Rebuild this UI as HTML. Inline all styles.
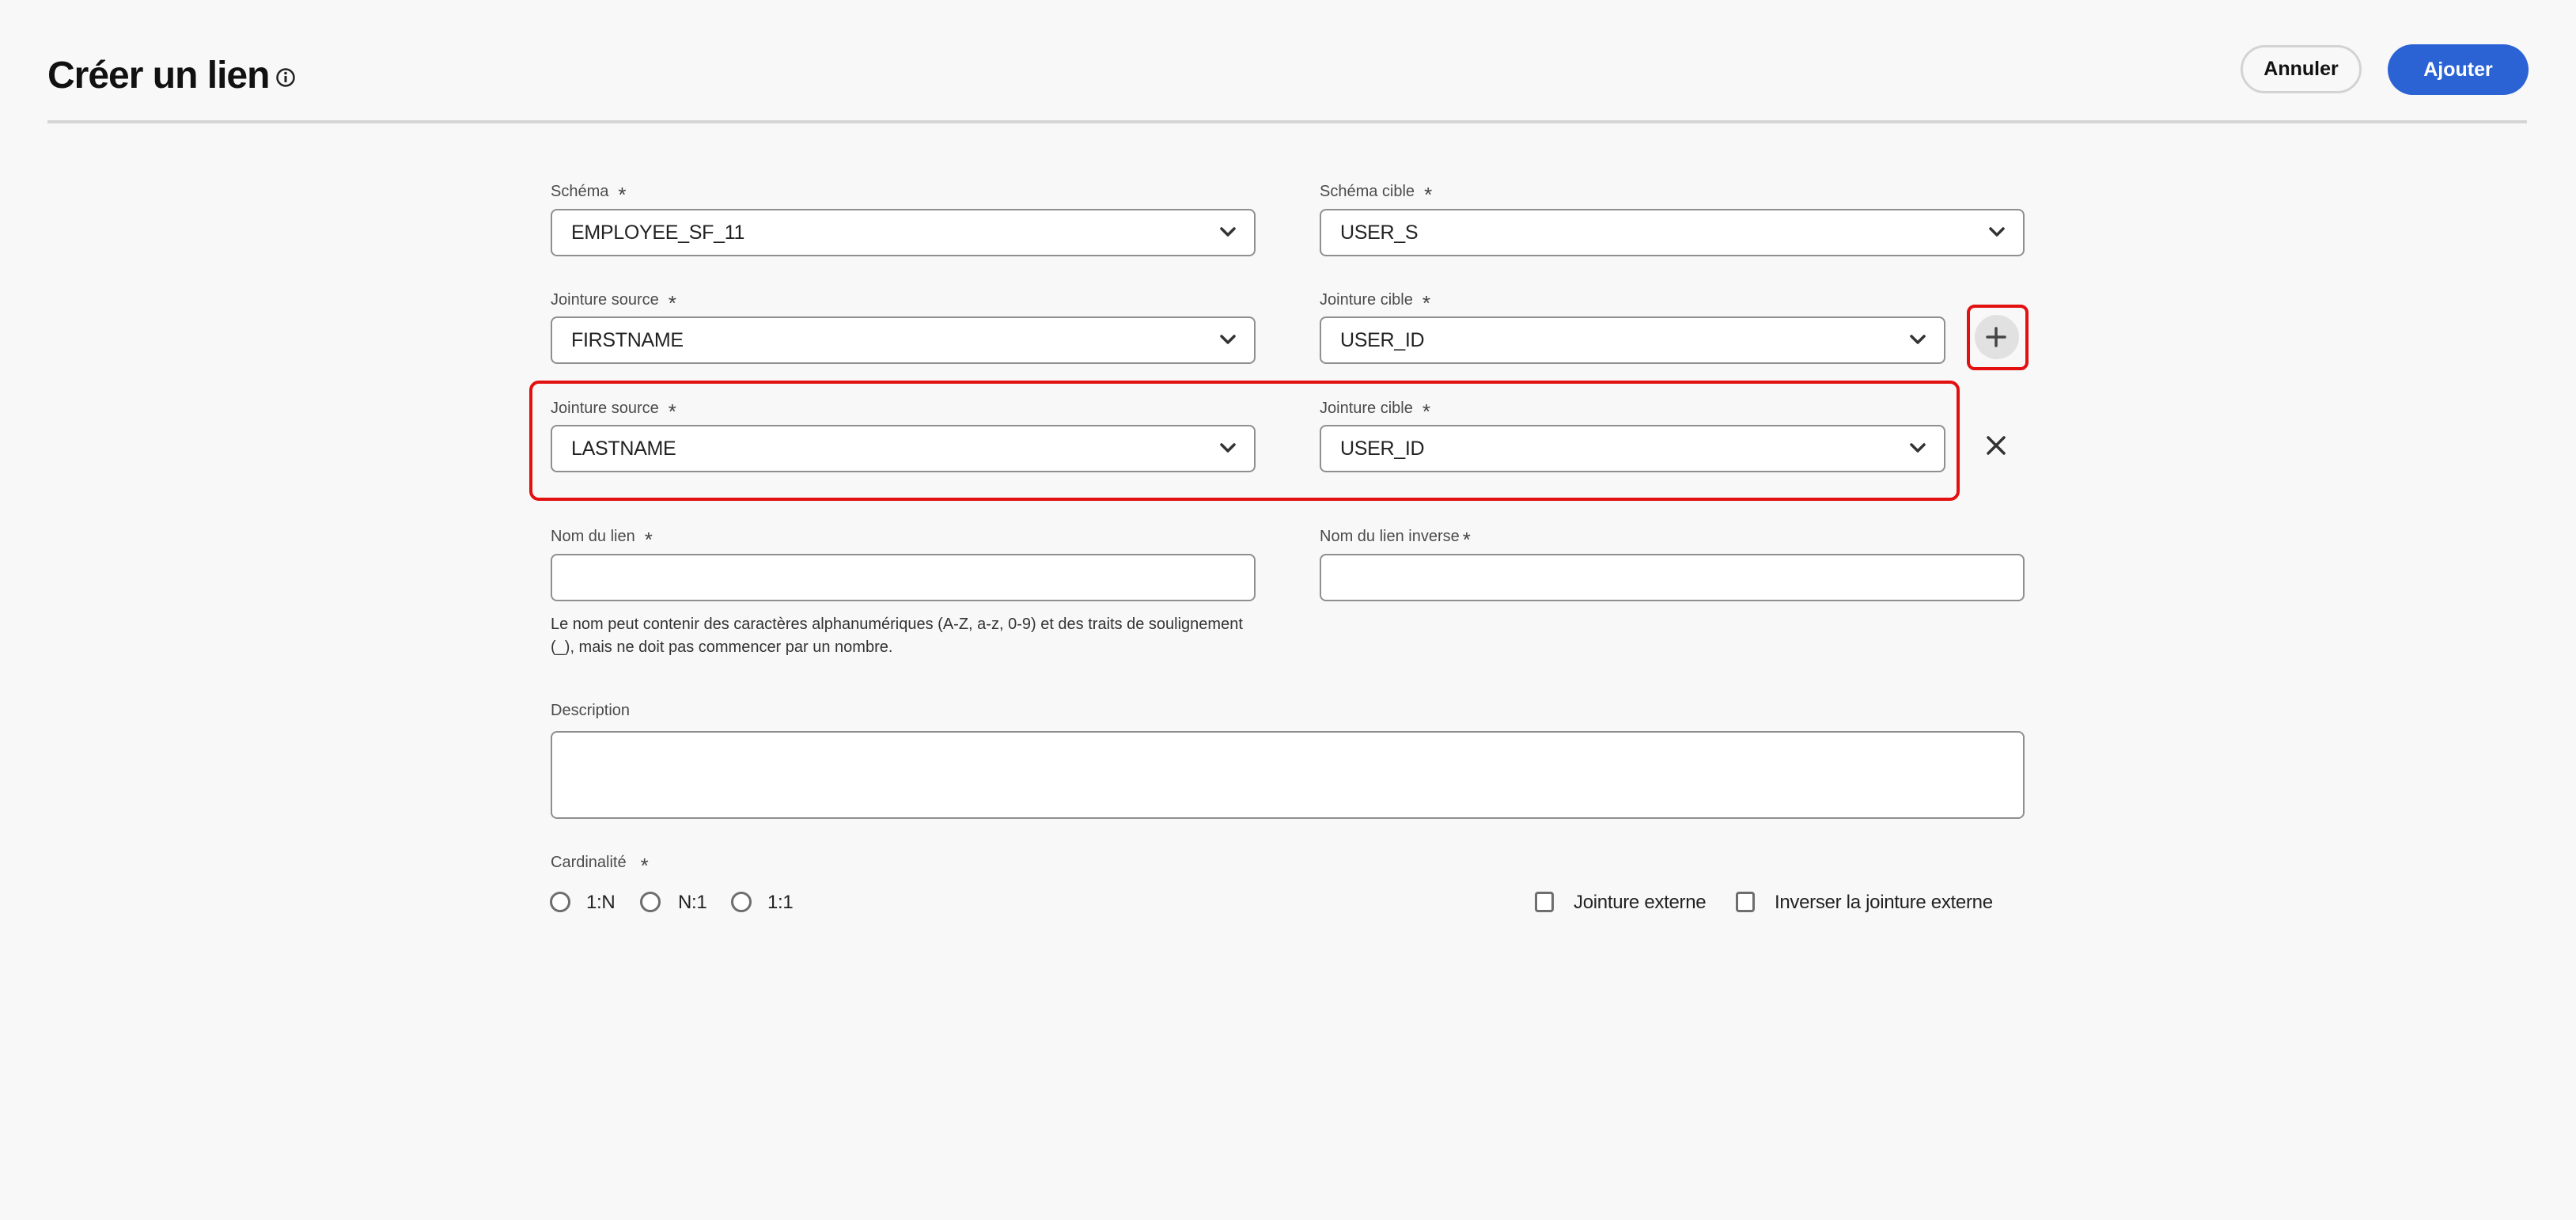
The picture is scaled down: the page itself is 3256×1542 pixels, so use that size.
<!DOCTYPE html>
<html><head><meta charset="utf-8"><style>
*{box-sizing:border-box;margin:0;padding:0}
body{width:3256px;height:1542px;background:#f8f8f8;font-family:"Liberation Sans",sans-serif;color:#222;position:relative;overflow:hidden}
.a{position:absolute}
.lbl{position:absolute;font-size:20px;color:#4b4b4b;white-space:nowrap}
.lbl b{font-weight:normal;font-size:26px;margin-left:12px;color:#444;position:relative;top:7px}
.f{position:absolute;background:#fff;border:2px solid #8f8f8f;border-radius:8px;height:60px;font-size:25px;padding-left:24px;line-height:56px;color:#222;letter-spacing:-0.3px}
.chev{position:absolute;right:22px;top:19px}
.radio{position:absolute;width:26px;height:26px;border:3px solid #6e6e6e;border-radius:50%;background:#fff}
.cb{position:absolute;width:24px;height:26px;border:3px solid #6e6e6e;border-radius:4px;background:#fff}
.t{position:absolute;font-size:24px;color:#222;white-space:nowrap;letter-spacing:-0.3px}
</style></head><body>
<div class="a" style="left:60px;top:68px;font-size:48px;font-weight:bold;color:#111;letter-spacing:-1px">Créer un lien</div>
<svg class="a" style="left:348px;top:85px" width="26" height="26" viewBox="0 0 26 26"><circle cx="13" cy="13" r="10.5" fill="none" stroke="#222" stroke-width="2.5"/><rect x="11.5" y="11" width="3" height="8" fill="#222"/><circle cx="13" cy="7.5" r="1.8" fill="#222"/></svg>
<div class="a" style="left:60px;top:152px;width:3134px;height:4px;background:#d5d5d5"></div>
<div class="a" style="left:2832px;top:57px;width:153px;height:61px;border:3px solid #d3d3d3;border-radius:31px;font-size:25px;font-weight:bold;text-align:center;line-height:55px;color:#111">Annuler</div>
<div class="a" style="left:3018px;top:56px;width:178px;height:64px;background:#2b63d5;border-radius:32px;font-size:25px;font-weight:bold;text-align:center;line-height:64px;color:#fff">Ajouter</div>

<div class="lbl" style="left:696px;top:224px">Schéma<b>*</b></div>
<div class="lbl" style="left:1668px;top:224px">Schéma cible<b>*</b></div>
<div class="f" style="left:696px;top:264px;width:891px">EMPLOYEE_SF_11<svg class="chev" width="22" height="16" viewBox="0 0 22 16"><path d="M3 4l8 8 8-8" fill="none" stroke="#333" stroke-width="3.5" stroke-linecap="round" stroke-linejoin="round"/></svg></div>
<div class="f" style="left:1668px;top:264px;width:891px">USER_S<svg class="chev" width="22" height="16" viewBox="0 0 22 16"><path d="M3 4l8 8 8-8" fill="none" stroke="#333" stroke-width="3.5" stroke-linecap="round" stroke-linejoin="round"/></svg></div>

<div class="lbl" style="left:696px;top:361px">Jointure source<b>*</b></div>
<div class="lbl" style="left:1668px;top:361px">Jointure cible<b>*</b></div>
<div class="f" style="left:696px;top:400px;width:891px">FIRSTNAME<svg class="chev" width="22" height="16" viewBox="0 0 22 16"><path d="M3 4l8 8 8-8" fill="none" stroke="#333" stroke-width="3.5" stroke-linecap="round" stroke-linejoin="round"/></svg></div>
<div class="f" style="left:1668px;top:400px;width:791px">USER_ID<svg class="chev" width="22" height="16" viewBox="0 0 22 16"><path d="M3 4l8 8 8-8" fill="none" stroke="#333" stroke-width="3.5" stroke-linecap="round" stroke-linejoin="round"/></svg></div>
<div class="a" style="left:2486px;top:385px;width:78px;height:83px;border:4px solid #e31010;border-radius:10px"></div>
<div class="a" style="left:2496px;top:398px;width:56px;height:56px;border-radius:50%;background:#e1e1e1"></div>
<svg class="a" style="left:2508px;top:411px" width="30" height="30" viewBox="0 0 30 30"><path d="M15 4v22M4 15h22" stroke="#444" stroke-width="3.5" stroke-linecap="round"/></svg>

<div class="a" style="left:669px;top:481px;width:1808px;height:152px;border:4px solid #e31010;border-radius:12px"></div>
<div class="lbl" style="left:696px;top:498px">Jointure source<b>*</b></div>
<div class="lbl" style="left:1668px;top:498px">Jointure cible<b>*</b></div>
<div class="f" style="left:696px;top:537px;width:891px">LASTNAME<svg class="chev" width="22" height="16" viewBox="0 0 22 16"><path d="M3 4l8 8 8-8" fill="none" stroke="#333" stroke-width="3.5" stroke-linecap="round" stroke-linejoin="round"/></svg></div>
<div class="f" style="left:1668px;top:537px;width:791px">USER_ID<svg class="chev" width="22" height="16" viewBox="0 0 22 16"><path d="M3 4l8 8 8-8" fill="none" stroke="#333" stroke-width="3.5" stroke-linecap="round" stroke-linejoin="round"/></svg></div>
<svg class="a" style="left:2510px;top:550px" width="26" height="26" viewBox="0 0 26 26"><path d="M3 3l20 20M23 3L3 23" stroke="#333" stroke-width="3.5" stroke-linecap="round"/></svg>

<div class="lbl" style="left:696px;top:660px">Nom du lien<b>*</b></div>
<div class="lbl" style="left:1668px;top:660px">Nom du lien inverse<b style="margin-left:4px">*</b></div>
<div class="f" style="left:696px;top:700px;width:891px"></div>
<div class="f" style="left:1668px;top:700px;width:891px"></div>
<div class="a" style="left:696px;top:775px;font-size:20px;line-height:29px;color:#333;width:950px">Le nom peut contenir des caractères alphanumériques (A-Z, a-z, 0-9) et des traits de soulignement<br>(_), mais ne doit pas commencer par un nombre.</div>

<div class="lbl" style="left:696px;top:887px">Description</div>
<div class="f" style="left:696px;top:924px;width:1863px;height:111px"></div>

<div class="lbl" style="left:696px;top:1072px">Cardinalité<b style="margin-left:18px">*</b></div>
<div class="radio" style="left:695px;top:1127px"></div><div class="t" style="left:741px;top:1127px">1:N</div>
<div class="radio" style="left:809px;top:1127px"></div><div class="t" style="left:857px;top:1127px">N:1</div>
<div class="radio" style="left:924px;top:1127px"></div><div class="t" style="left:970px;top:1127px">1:1</div>
<div class="cb" style="left:1940px;top:1127px"></div><div class="t" style="left:1989px;top:1127px">Jointure externe</div>
<div class="cb" style="left:2194px;top:1127px"></div><div class="t" style="left:2243px;top:1127px">Inverser la jointure externe</div>
</body></html>
